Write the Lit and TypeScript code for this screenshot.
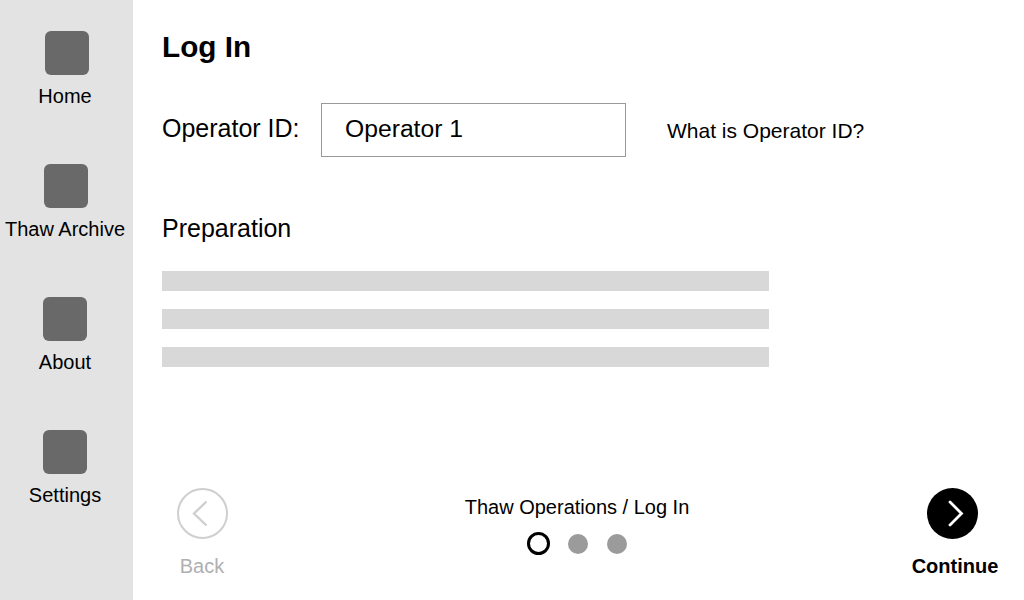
import { LitElement, html, css } from "lit";
import { customElement } from "lit/decorators.js";

const NAV = [
  { label: "Home", cls: "i0" },
  { label: "Thaw Archive", cls: "i1" },
  { label: "About", cls: "i2" },
  { label: "Settings", cls: "i3" },
];

@customElement("app-root")
export class AppRoot extends LitElement {
  static styles = css`
    :host {
      display: flex;
      width: 1024px;
      height: 600px;
      overflow: hidden;
      background: #fff;
      color: #000;
      font-family: "Liberation Sans", Arial, sans-serif;
    }
    .side {
      width: 133px;
      flex: none;
      box-sizing: border-box;
      background: #e3e3e3;
      padding: 31px 3px 0 0;
      display: flex;
      flex-direction: column;
      gap: 0;
    }
    .nav {
      height: 133px;
      display: flex;
      flex-direction: column;
      align-items: center;
      font-size: 20px;
      line-height: 24px;
      white-space: nowrap;
    }
    .icon {
      width: 44px;
      height: 44px;
      border-radius: 6px;
      background: #696969;
      margin-bottom: 9px;
    }
    .i0 { margin-left: 4px; }
    .i1 { margin-left: 2px; }
    .main {
      flex: 1;
      min-width: 0;
      box-sizing: border-box;
      padding: 30px 26px 22px 29px;
      display: flex;
      flex-direction: column;
    }
    h1 {
      margin: 0;
      font-size: 29.7px;
      line-height: 34px;
      font-weight: 700;
    }
    .op {
      display: flex;
      align-items: center;
      margin-top: 39px;
      font-size: 25px;
    }
    .op-label { width: 159px; flex: none; padding-bottom: 4px; }
    .input {
      width: 305px;
      height: 54px;
      box-sizing: border-box;
      border: 1px solid #999;
      padding-left: 23px;
      display: flex;
      align-items: center;
      font-size: 24.7px;
      padding-bottom: 2px;
    }
    .help {
      margin-left: 41px;
      font-size: 21px;
      padding-top: 2px;
    }
    h2 {
      margin: 56px 0 0;
      font-size: 25px;
      line-height: 30px;
      font-weight: 400;
    }
    .bars {
      margin-top: 28px;
      display: flex;
      flex-direction: column;
      gap: 18px;
    }
    .bar { width: 607px; height: 20px; background: #d8d8d8; }
    .foot {
      margin-top: auto;
      display: grid;
      grid-template-columns: 80px 1fr 86px;
      align-items: start;
      font-size: 20px;
      line-height: 24px;
    }
    .act {
      display: flex;
      flex-direction: column;
      align-items: center;
      gap: 15px;
    }
    .act svg { display: block; }
    .back { color: #b0b0b0; }
    .cont { font-weight: 700; }
    .cont svg { margin-right: 5px; }
    .mid {
      display: flex;
      flex-direction: column;
      align-items: center;
      margin-top: 7px;
    }
    .dots {
      display: flex;
      align-items: center;
      margin-top: 13px;
    }
    .dot { width: 20px; height: 20px; border-radius: 50%; background: #9b9b9b; margin-left: 19px; }
    .ring {
      width: 23px;
      height: 23px;
      box-sizing: border-box;
      border-radius: 50%;
      border: 3px solid #000;
      margin-right: -1px;
    }
  `;

  render() {
    return html`
      <nav class="side">
        ${NAV.map(
          (n) => html`<div class="nav"><div class="icon ${n.cls}"></div>${n.label}</div>`
        )}
      </nav>
      <main class="main">
        <h1>Log In</h1>
        <div class="op">
          <span class="op-label">Operator ID:</span>
          <div class="input">Operator 1</div>
          <span class="help">What is Operator ID?</span>
        </div>
        <h2>Preparation</h2>
        <div class="bars">
          <div class="bar"></div>
          <div class="bar"></div>
          <div class="bar"></div>
        </div>
        <footer class="foot">
          <div class="act back">
            <svg width="51" height="51" viewBox="0 0 51 51" fill="none">
              <circle cx="25.5" cy="25.5" r="24.5" stroke="#cfcfcf" stroke-width="2" />
              <path d="M29.5 13.5 L17 25.5 L29.5 37.5" stroke="#cfcfcf" stroke-width="2.4" />
            </svg>
            <span>Back</span>
          </div>
          <div class="mid">
            <span>Thaw Operations / Log In</span>
            <div class="dots">
              <div class="ring"></div>
              <div class="dot"></div>
              <div class="dot"></div>
            </div>
          </div>
          <div class="act cont">
            <svg width="51" height="51" viewBox="0 0 51 51" fill="none">
              <circle cx="25.5" cy="25.5" r="25.5" fill="#000" />
              <path d="M23 14 L34.5 25.5 L23 37" stroke="#fff" stroke-width="2.8" stroke-linecap="round" stroke-linejoin="miter" />
            </svg>
            <span>Continue</span>
          </div>
        </footer>
      </main>
    `;
  }
}
